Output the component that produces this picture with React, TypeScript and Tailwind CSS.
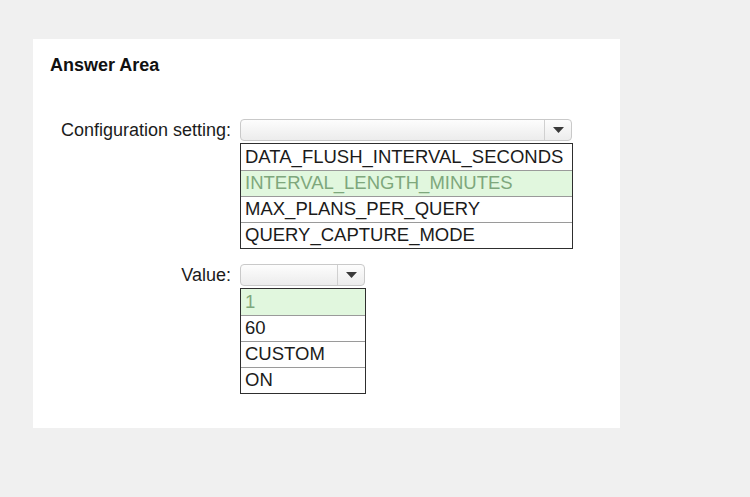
const configOptions = [
  "DATA_FLUSH_INTERVAL_SECONDS",
  "INTERVAL_LENGTH_MINUTES",
  "MAX_PLANS_PER_QUERY",
  "QUERY_CAPTURE_MODE",
];

const valueOptions = ["1", "60", "CUSTOM", "ON"];

const Select = ({ width }: { width: string }) => (
  <div
    className={`${width} h-[22px] flex rounded-[4px] border border-[#c9c9c9] bg-gradient-to-b from-[#fdfdfd] to-[#ececec]`}
  >
    <div className="flex-1" />
    <div className="w-[27px] border-l border-[#d0d0d0] flex items-center justify-center">
      <svg width="11" height="6" viewBox="0 0 11 6">
        <path d="M0 0 L11 0 L5.5 6 Z" fill="#3a3a3a" />
      </svg>
    </div>
  </div>
);

const OptionList = ({
  items,
  selected,
  width,
}: {
  items: string[];
  selected: number;
  width: string;
}) => (
  <div className={`${width} mt-[2px] border border-[#2e2e2e] bg-white`}>
    {items.map((item, i) => (
      <div
        key={item}
        className={`h-[26px] px-[4px] flex items-center text-[18.5px] leading-none ${
          i > 0 ? "border-t border-[#9a9a9a]" : ""
        } ${i === selected ? "bg-[#e1f7de] text-[#7ea77c]" : "text-[#1b1b1b]"}`}
      >
        {item}
      </div>
    ))}
  </div>
);

export default function App() {
  return (
    <div
      className="w-[750px] h-[497px] bg-[#f0f0f0] pt-[39px] pl-[33px]"
      style={{ fontFamily: '"Liberation Sans", Arial, sans-serif' }}
    >
      <div className="w-[587px] h-[389px] bg-white pt-[17px] pl-[17px]">
        <h2 className="text-[18px] font-bold text-[#111] leading-none">
          Answer Area
        </h2>

        <div className="mt-[45px] grid grid-cols-[181px_auto] gap-x-[9px] items-start">
          <div className="text-right text-[18px] text-[#1b1b1b] leading-[22px]">
            Configuration setting:
          </div>
          <div>
            <Select width="w-[332px]" />
            <OptionList items={configOptions} selected={1} width="w-[333px]" />
          </div>

          <div className="mt-[15px] text-right text-[18px] text-[#1b1b1b] leading-[22px]">
            Value:
          </div>
          <div className="mt-[15px]">
            <Select width="w-[125px]" />
            <OptionList items={valueOptions} selected={0} width="w-[126px]" />
          </div>
        </div>
      </div>
    </div>
  );
}
